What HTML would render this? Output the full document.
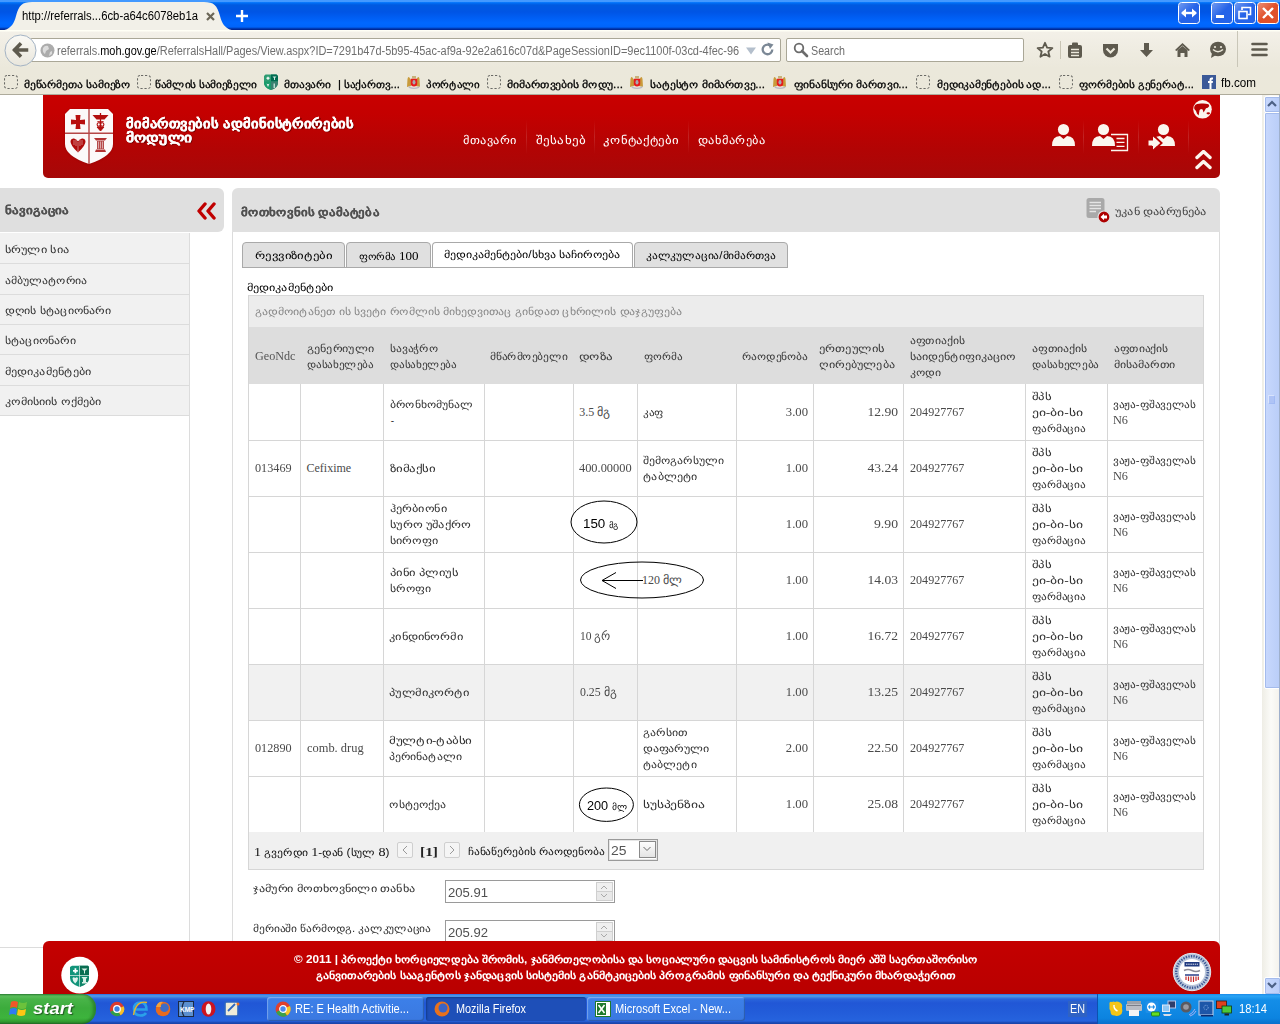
<!DOCTYPE html><html><head><meta charset="utf-8"><style>
html,body{margin:0;padding:0;width:1280px;height:1024px;overflow:hidden;background:#fff}
body{position:relative;font-family:"Liberation Sans",sans-serif}
body div, body svg{position:absolute}
.t{white-space:pre}
</style></head><body>
<div style="left:0px;top:0px;width:1280px;height:30px;background:linear-gradient(#4399ff 0px,#4399ff 1.8px,#0073fa 2.6px,#005ae0 5px,#0055e5 12px,#005df2 17px,#0068ff 23px,#0064fa 27px,#0034a8 28.8px,#00208a 30px)"></div>
<svg style="left:0;top:0" width="240" height="30"><path d="M0,30.5 C10,30.5 14,24 16,16 C19,5 22,2 32,2 L204,2 C214,2 217,5 220,16 C222,24 226,30.5 236,30.5 Z" fill="#f2f0e8"/></svg>
<div class="t" style="top:9px;font-family:'Liberation Sans',sans-serif;font-size:12px;font-weight:400;color:#000;line-height:14px;left:22.0px;transform:scaleX(0.942);transform-origin:left center;">http://referrals...6cb-a64c6078eb1a</div>
<svg style="left:204px;top:10px" width="13" height="13"><path d="M3,3 L10,10 M10,3 L3,10" stroke="#6b6657" stroke-width="2.2"/></svg>
<svg style="left:235px;top:9px" width="14" height="14"><path d="M7,1 V13 M1,7 H13" stroke="#fff" stroke-width="2.4"/></svg>
<svg style="left:1178px;top:2px" width="22" height="22"><defs><linearGradient id="wb1178" x1="0" y1="0" x2="1" y2="1"><stop offset="0" stop-color="#fff" stop-opacity=".35"/><stop offset=".5" stop-color="#fff" stop-opacity="0"/></linearGradient></defs><rect x="0.5" y="0.5" width="21" height="21" rx="3" fill="#2563e8" stroke="#fff" stroke-width="1"/><rect x="1" y="1" width="20" height="20" rx="3" fill="url(#wb1178)"/><path d="M4,11 H18" stroke="#fff" stroke-width="2.4"/><path d="M3,11 L8,6.5 V15.5Z M19,11 L14,6.5 V15.5Z" fill="#fff"/></svg>
<svg style="left:1211px;top:2px" width="22" height="22"><defs><linearGradient id="wb1211" x1="0" y1="0" x2="1" y2="1"><stop offset="0" stop-color="#fff" stop-opacity=".35"/><stop offset=".5" stop-color="#fff" stop-opacity="0"/></linearGradient></defs><rect x="0.5" y="0.5" width="21" height="21" rx="3" fill="#2563e8" stroke="#fff" stroke-width="1"/><rect x="1" y="1" width="20" height="20" rx="3" fill="url(#wb1211)"/><rect x="5" y="13" width="8" height="3" fill="#fff"/></svg>
<svg style="left:1234px;top:2px" width="22" height="22"><defs><linearGradient id="wb1234" x1="0" y1="0" x2="1" y2="1"><stop offset="0" stop-color="#fff" stop-opacity=".35"/><stop offset=".5" stop-color="#fff" stop-opacity="0"/></linearGradient></defs><rect x="0.5" y="0.5" width="21" height="21" rx="3" fill="#2563e8" stroke="#fff" stroke-width="1"/><rect x="1" y="1" width="20" height="20" rx="3" fill="url(#wb1234)"/><rect x="5" y="9.5" width="8" height="7" fill="none" stroke="#fff" stroke-width="1.6"/><path d="M8,8 V5.5 H16.5 V12.5 H14" fill="none" stroke="#fff" stroke-width="1.6"/></svg>
<svg style="left:1257px;top:2px" width="22" height="22"><defs><linearGradient id="wb1257" x1="0" y1="0" x2="1" y2="1"><stop offset="0" stop-color="#fff" stop-opacity=".35"/><stop offset=".5" stop-color="#fff" stop-opacity="0"/></linearGradient></defs><rect x="0.5" y="0.5" width="21" height="21" rx="3" fill="#e0502a" stroke="#fff" stroke-width="1"/><rect x="1" y="1" width="20" height="20" rx="3" fill="url(#wb1257)"/><path d="M6,6 L16,16 M16,6 L6,16" stroke="#fff" stroke-width="2.4"/></svg>
<div style="left:0px;top:30px;width:1280px;height:65px;background:linear-gradient(#fffff5 0px,#fffff5 1px,#f3f0e8 2px,#ebe8db 38px,#ebe8da)"></div>
<div style="left:0px;top:94px;width:1280px;height:1px;background:#aeab9c"></div>
<div style="left:30px;top:38px;width:749px;height:22px;background:#fff;border:1px solid #aaa797;border-radius:2px"></div>
<svg style="left:4px;top:34px" width="33" height="33"><defs><linearGradient id="bk" x1="0" y1="0" x2="0" y2="1"><stop offset="0" stop-color="#faf9f5"/><stop offset="1" stop-color="#e9e6dc"/></linearGradient></defs><circle cx="16.5" cy="16.5" r="15.5" fill="url(#bk)" stroke="#a3b3c4" stroke-width="1"/><path d="M10.5,16 L15.8,10.5 M10.5,16 L15.8,21.5 M11,16 H22.5" stroke="#5e5a4e" stroke-width="3.5" fill="none" stroke-linecap="square"/></svg>
<svg style="left:40px;top:43px" width="15" height="15"><circle cx="7.5" cy="7.5" r="7" fill="#acacac"/><path d="M3,5 Q5,2 8,3 L9,6 L6,8 L5,11 Q2,9 3,5Z M10,9 L12,8 L12,11 L9,13Z" fill="#dcdcdc"/></svg>
<div class="t" style="top:44px;font-family:'Liberation Sans',sans-serif;font-size:12px;font-weight:400;color:#6f6f6f;line-height:14px;left:57.0px;transform:scaleX(0.913);transform-origin:left center;">referrals.<span style="color:#000">moh.gov.ge</span>/ReferralsHall/Pages/View.aspx?ID=7291b47d-5b95-45ac-af9a-92e2a616c07d&amp;PageSessionID=9ec1100f-03cd-4fec-96</div>
<svg style="left:745px;top:46px" width="12" height="10"><path d="M1,1.5 H11 L6,8.5Z" fill="#b4bfcc"/></svg>
<svg style="left:760px;top:42px" width="15" height="15"><path d="M12.3,7.5 A4.8,4.8 0 1 1 9.7,3.2" stroke="#7b8896" stroke-width="2.3" fill="none"/><path d="M7.5,0.5 L13.5,2.5 L10,7Z" fill="#7b8896"/></svg>
<div style="left:786px;top:38px;width:236px;height:22px;background:#fff;border:1px solid #aaa797;border-radius:2px"></div>
<svg style="left:793px;top:42px" width="16" height="16"><circle cx="6" cy="6" r="4.3" stroke="#6b6b6b" stroke-width="1.8" fill="none"/><path d="M9,9 L14,14" stroke="#6b6b6b" stroke-width="2.6" stroke-linecap="round"/></svg>
<div class="t" style="top:44px;font-family:'Liberation Sans',sans-serif;font-size:12px;font-weight:400;color:#6d6d6d;line-height:14px;left:811.0px;transform:scaleX(0.894);transform-origin:left center;">Search</div>
<svg style="left:1036px;top:41px" width="18" height="18"><path d="M9,1.8 L11.1,6.7 L16.4,7.1 L12.3,10.5 L13.6,15.7 L9,12.9 L4.4,15.7 L5.7,10.5 L1.6,7.1 L6.9,6.7Z" fill="none" stroke="#5e5a4e" stroke-width="1.8" stroke-linejoin="round"/></svg>
<div style="left:1060px;top:41px;width:1px;height:18px;background:#c8c4b4"></div>
<svg style="left:1067px;top:42px" width="16" height="16"><rect x="1" y="3" width="14" height="13" rx="2" fill="#5e5a4e"/><rect x="5" y="0.5" width="6" height="4" rx="1" fill="#5e5a4e"/><path d="M4,7.5 H12 M4,10.5 H12 M4,13.5 H12" stroke="#ebe8db" stroke-width="1.3"/></svg>
<svg style="left:1102px;top:43px" width="17" height="15"><path d="M1,1 H16 V7 A7.5,7.5 0 0 1 1,7Z" fill="#5e5a4e"/><path d="M4.5,5.5 L8.5,9.5 L12.5,5.5" stroke="#ebe8db" stroke-width="2.2" fill="none"/></svg>
<svg style="left:1139px;top:42px" width="15" height="16"><path d="M5,1 H10 V8 H14 L7.5,15 L1,8 H5Z" fill="#5e5a4e"/></svg>
<svg style="left:1174px;top:42px" width="17" height="16"><path d="M8.5,1 L16,8 L14.5,9 L8.5,3.5 L2.5,9 L1,8Z" fill="#5e5a4e"/><path d="M3.5,8 L8.5,4 L13.5,8 V15 H10.5 V11 H6.5 V15 H3.5Z" fill="#5e5a4e"/></svg>
<svg style="left:1209px;top:41px" width="18" height="18"><ellipse cx="9" cy="8" rx="8" ry="7.3" fill="#5e5a4e"/><path d="M3,12 L2,17 L7,14Z" fill="#5e5a4e"/><circle cx="6" cy="6" r="1.1" fill="#ebe8db"/><circle cx="12" cy="6" r="1.1" fill="#ebe8db"/><path d="M4,8.5 Q9,13 14,8.5" stroke="#ebe8db" stroke-width="1.6" fill="none"/></svg>
<div style="left:1237px;top:31px;width:1px;height:36px;background:#c9c6b8"></div>
<svg style="left:1251px;top:42px" width="17" height="15"><path d="M1.5,2 H15.5 M1.5,7.5 H15.5 M1.5,13 H15.5" stroke="#5e5a4e" stroke-width="2.6" stroke-linecap="round"/></svg>
<svg style="left:4px;top:75px" width="14" height="14"><rect x="0.5" y="0.5" width="13" height="13" rx="2.5" fill="none" stroke="#6a6a66" stroke-width="1.1" stroke-dasharray="2.2,1.8" stroke-dashoffset="-1"/></svg>
<div class="t" style="top:77px;font-family:'Liberation Sans',sans-serif;font-size:10px;font-weight:400;color:#000;line-height:16px;-webkit-text-stroke:0.25px #000;left:24.0px;transform:scaleX(1.160);transform-origin:left center;">მეწარმეთა სამიეზო</div>
<svg style="left:137px;top:75px" width="14" height="14"><rect x="0.5" y="0.5" width="13" height="13" rx="2.5" fill="none" stroke="#6a6a66" stroke-width="1.1" stroke-dasharray="2.2,1.8" stroke-dashoffset="-1"/></svg>
<div class="t" style="top:77px;font-family:'Liberation Sans',sans-serif;font-size:10px;font-weight:400;color:#000;line-height:16px;-webkit-text-stroke:0.25px #000;left:155.0px;transform:scaleX(1.136);transform-origin:left center;">წამლის სამიეზელი</div>
<svg style="left:264px;top:74px" width="14" height="16"><path d="M1.5,0.5 H12.5 L14,2 V9 Q14,13.5 7,16 Q0,13.5 0,9 V2Z" fill="#2e9c72"/><path d="M7,0.5 H12.5 L14,2 V7.5 H7Z" fill="#006b50"/><path d="M7,7.5 H14 V9 Q14,13.5 7,16Z" fill="#3a8070"/><path d="M0,7.5 H7 V16 Q0,13.5 0,9Z" fill="#1a9a6a"/><path d="M2.5,4.3 H5.5 M4,2.8 V5.8" stroke="#eef8f4" stroke-width="1.4"/><path d="M8.5,2.5 H12.5 L11,4 V6 H10 V4Z" fill="#cfe8df"/><path d="M2.5,9.5 Q4,11 5.5,9.5 L4,13Z" fill="#e8f5f0"/><path d="M9.5,9.5 H11 V14 H9.5Z" fill="#b9d9cf"/></svg>
<div class="t" style="top:77px;font-family:'Liberation Sans',sans-serif;font-size:10px;font-weight:400;color:#000;line-height:16px;-webkit-text-stroke:0.25px #000;left:284.0px;transform:scaleX(1.146);transform-origin:left center;">მთავარი</div>
<div class="t" style="top:77px;font-family:'Liberation Sans',sans-serif;font-size:10px;font-weight:400;color:#000;line-height:16px;-webkit-text-stroke:0.25px #000;left:338.0px;transform:scaleX(1.133);transform-origin:left center;">| საქართვ...</div>
<svg style="left:406px;top:75px" width="15" height="14"><path d="M1,12 L1.5,4 Q2,1.5 3,2 L5,5 L5,11Z" fill="#c99b3a"/><path d="M14,12 L13.5,4 Q13,1.5 12,2 L10,5 L10,11Z" fill="#c99b3a"/><rect x="6" y="1" width="4" height="2.5" fill="#c8b27a"/><path d="M4.8,3.8 H11.2 V9 Q11.2,11 8,11.5 Q4.8,11 4.8,9Z" fill="#e61c1c"/><ellipse cx="8" cy="7.3" rx="1.5" ry="2.3" fill="#a9a9b0"/><path d="M2,11 Q8,14.5 14,11 L13,13 Q8,15 3,13Z" fill="#b9b9c4"/></svg>
<div class="t" style="top:77px;font-family:'Liberation Sans',sans-serif;font-size:10px;font-weight:400;color:#000;line-height:16px;-webkit-text-stroke:0.25px #000;left:426.0px;transform:scaleX(1.102);transform-origin:left center;">პორტალი</div>
<svg style="left:487px;top:75px" width="14" height="14"><rect x="0.5" y="0.5" width="13" height="13" rx="2.5" fill="none" stroke="#6a6a66" stroke-width="1.1" stroke-dasharray="2.2,1.8" stroke-dashoffset="-1"/></svg>
<div class="t" style="top:77px;font-family:'Liberation Sans',sans-serif;font-size:10px;font-weight:400;color:#000;line-height:16px;-webkit-text-stroke:0.25px #000;left:507.0px;transform:scaleX(1.182);transform-origin:left center;">მიმართვების მოდუ...</div>
<svg style="left:629px;top:75px" width="15" height="14"><path d="M1,12 L1.5,4 Q2,1.5 3,2 L5,5 L5,11Z" fill="#c99b3a"/><path d="M14,12 L13.5,4 Q13,1.5 12,2 L10,5 L10,11Z" fill="#c99b3a"/><rect x="6" y="1" width="4" height="2.5" fill="#c8b27a"/><path d="M4.8,3.8 H11.2 V9 Q11.2,11 8,11.5 Q4.8,11 4.8,9Z" fill="#e61c1c"/><ellipse cx="8" cy="7.3" rx="1.5" ry="2.3" fill="#a9a9b0"/><path d="M2,11 Q8,14.5 14,11 L13,13 Q8,15 3,13Z" fill="#b9b9c4"/></svg>
<div class="t" style="top:77px;font-family:'Liberation Sans',sans-serif;font-size:10px;font-weight:400;color:#000;line-height:16px;-webkit-text-stroke:0.25px #000;left:650.0px;transform:scaleX(1.160);transform-origin:left center;">სატესტო მიმართვე...</div>
<svg style="left:772px;top:75px" width="15" height="14"><path d="M1,12 L1.5,4 Q2,1.5 3,2 L5,5 L5,11Z" fill="#c99b3a"/><path d="M14,12 L13.5,4 Q13,1.5 12,2 L10,5 L10,11Z" fill="#c99b3a"/><rect x="6" y="1" width="4" height="2.5" fill="#c8b27a"/><path d="M4.8,3.8 H11.2 V9 Q11.2,11 8,11.5 Q4.8,11 4.8,9Z" fill="#e61c1c"/><ellipse cx="8" cy="7.3" rx="1.5" ry="2.3" fill="#a9a9b0"/><path d="M2,11 Q8,14.5 14,11 L13,13 Q8,15 3,13Z" fill="#b9b9c4"/></svg>
<div class="t" style="top:77px;font-family:'Liberation Sans',sans-serif;font-size:10px;font-weight:400;color:#000;line-height:16px;-webkit-text-stroke:0.25px #000;left:794.0px;transform:scaleX(1.162);transform-origin:left center;">ფინანსური მართვი...</div>
<svg style="left:916px;top:75px" width="14" height="14"><rect x="0.5" y="0.5" width="13" height="13" rx="2.5" fill="none" stroke="#6a6a66" stroke-width="1.1" stroke-dasharray="2.2,1.8" stroke-dashoffset="-1"/></svg>
<div class="t" style="top:77px;font-family:'Liberation Sans',sans-serif;font-size:10px;font-weight:400;color:#000;line-height:16px;-webkit-text-stroke:0.25px #000;left:937.0px;transform:scaleX(1.150);transform-origin:left center;">მედიკამენტების ად...</div>
<svg style="left:1059px;top:75px" width="14" height="14"><rect x="0.5" y="0.5" width="13" height="13" rx="2.5" fill="none" stroke="#6a6a66" stroke-width="1.1" stroke-dasharray="2.2,1.8" stroke-dashoffset="-1"/></svg>
<div class="t" style="top:77px;font-family:'Liberation Sans',sans-serif;font-size:10px;font-weight:400;color:#000;line-height:16px;-webkit-text-stroke:0.25px #000;left:1079.0px;transform:scaleX(1.137);transform-origin:left center;">ფორმების გენერატ...</div>
<svg style="left:1202px;top:75px" width="14" height="14"><rect width="14" height="14" fill="#3b5998"/><path d="M7.5,14 V8 H6 V6 H7.5 V4.5 Q7.5,2.5 9.8,2.5 H11 V4.5 H10 Q9.5,4.5 9.5,5 V6 H11 L10.7,8 H9.5 V14Z" fill="#fff"/></svg>
<div class="t" style="top:76px;font-family:'Liberation Sans',sans-serif;font-size:12px;font-weight:400;color:#000;line-height:14px;left:1221.0px;transform:scaleX(0.972);transform-origin:left center;">fb.com</div>
<div style="left:43px;top:95px;width:1177px;height:83px;background:linear-gradient(#c90000,#c40000 18px,#b20404 55px,#a60808);border-radius:0 0 5px 5px"></div>
<svg style="left:60px;top:104px" width="60" height="64" viewBox="0 0 60 64">
<defs><filter id="sh" x="-20%" y="-20%" width="140%" height="140%"><feGaussianBlur stdDeviation="1.2"/></filter></defs>
<path d="M10,5.5 H48 L53,10.5 V40 Q53,52 29,60.5 Q5,52 5,40 V10.5Z" fill="#700" opacity=".45" filter="url(#sh)"/>
<path d="M10,5 H48 L53,10 V40 Q53,52 29,60 Q5,52 5,40 V10Z" fill="#fcf9f9"/>
<path d="M29,5 V60 M5,29.2 H53" stroke="#b54747" stroke-width="1.4"/>
<path d="M15.5,11 H20.5 L20,16 L25,15.5 V20.5 L20,20 L20.5,25 H15.5 L16,20 L11,20.5 V15.5 L16,16Z" fill="#b80f0f"/>
<path d="M32.5,11 H48.5 L44.5,15.5 H36.5Z" fill="#b20e0e"/>
<path d="M40.5,9 V26" stroke="#b20e0e" stroke-width="1.3"/>
<circle cx="38.8" cy="20.5" r="1.7" fill="none" stroke="#b20e0e" stroke-width="1.1"/><circle cx="42.2" cy="20.5" r="1.7" fill="none" stroke="#b20e0e" stroke-width="1.1"/>
<path d="M37.5,17.5 Q40.5,19 43.5,17.5 M37,23 H44 L40.5,27Z" stroke="#b20e0e" stroke-width="1" fill="#b20e0e"/>
<path d="M10.5,37 Q11,34 14,34.5 Q16.5,35 18,37.5 Q19.5,35 22,34.5 Q25,34 25.5,37 Q26,41 18,48.5 Q10,41 10.5,37Z" fill="#b00c0c"/>
<path d="M14,36 V41 M16,35.5 V42 M18,38 V48 M20,35.5 V42 M22,36 V41" stroke="#e8c0c0" stroke-width=".6"/>
<path d="M34,34 H47 L45,36.5 H36Z" fill="#b33232"/>
<path d="M37,37 H44 V45 H37Z" fill="#b54a4a"/>
<path d="M38.5,37.5 V44.5 M40.5,37.5 V44.5 M42.5,37.5 V44.5" stroke="#ecd0d0" stroke-width=".7"/>
<path d="M36,45.5 H45 L46,48 H35Z" fill="#b33232"/>
</svg>
<div class="t" style="top:116px;font-family:'Liberation Sans',sans-serif;font-size:13px;font-weight:700;color:#fff;line-height:16px;text-shadow:1px 1px 0 rgba(60,0,0,.55);-webkit-text-stroke:0.3px #fff;left:126.0px;transform:scaleX(1.120);transform-origin:left center;">მიმართვების ადმინისტრირების</div>
<div class="t" style="top:130px;font-family:'Liberation Sans',sans-serif;font-size:13px;font-weight:700;color:#fff;line-height:16px;text-shadow:1px 1px 0 rgba(60,0,0,.55);-webkit-text-stroke:0.3px #fff;left:126.0px;transform:scaleX(1.188);transform-origin:left center;">მოდული</div>
<div class="t" style="top:132px;font-family:'Liberation Sans',sans-serif;font-size:11px;font-weight:400;color:#fff;line-height:16px;left:463.0px;transform:scaleX(1.125);transform-origin:left center;">მთავარი</div>
<div class="t" style="top:132px;font-family:'Liberation Sans',sans-serif;font-size:11px;font-weight:400;color:#fff;line-height:16px;left:536.0px;transform:scaleX(1.190);transform-origin:left center;">შესახებ</div>
<div class="t" style="top:132px;font-family:'Liberation Sans',sans-serif;font-size:11px;font-weight:400;color:#fff;line-height:16px;left:603.0px;transform:scaleX(1.169);transform-origin:left center;">კონტაქტები</div>
<div class="t" style="top:132px;font-family:'Liberation Sans',sans-serif;font-size:11px;font-weight:400;color:#fff;line-height:16px;left:698.0px;transform:scaleX(1.133);transform-origin:left center;">დახმარება</div>
<div style="left:526px;top:120px;width:1px;height:34px;background:linear-gradient(rgba(255,255,255,0),rgba(255,255,255,.13),rgba(255,255,255,0))"></div>
<div style="left:594px;top:120px;width:1px;height:34px;background:linear-gradient(rgba(255,255,255,0),rgba(255,255,255,.13),rgba(255,255,255,0))"></div>
<div style="left:688px;top:120px;width:1px;height:34px;background:linear-gradient(rgba(255,255,255,0),rgba(255,255,255,.13),rgba(255,255,255,0))"></div>
<div style="left:1083px;top:120px;width:1px;height:34px;background:linear-gradient(rgba(255,255,255,0),rgba(255,255,255,.13),rgba(255,255,255,0))"></div>
<div style="left:1138px;top:120px;width:1px;height:34px;background:linear-gradient(rgba(255,255,255,0),rgba(255,255,255,.13),rgba(255,255,255,0))"></div>
<div style="left:1188px;top:120px;width:1px;height:34px;background:linear-gradient(rgba(255,255,255,0),rgba(255,255,255,.13),rgba(255,255,255,0))"></div>
<svg style="left:1040px;top:120px" width="160" height="36"><circle cx="23.5" cy="9.5" r="5.6" fill="#fbf6ee"/><path d="M12,26 Q12,16 20,16 L23.5,19 L27,16 Q35,16 35,26Z" fill="#fbf6ee"/><circle cx="63.5" cy="9.5" r="5.6" fill="#fbf6ee"/><path d="M52,26 Q52,16 60,16 L63.5,19 L67,16 Q75,16 75,26Z" fill="#fbf6ee"/><path d="M71,14.5 H87.5 V30.5 H71" stroke="#fbf6ee" stroke-width="1.3" fill="none"/><path d="M76.5,18.5 H84.5 M76.5,22.3 H84.5 M76.5,26.3 H84.5" stroke="#fbf6ee" stroke-width="1.3"/><circle cx="123.5" cy="9.5" r="5.6" fill="#fbf6ee"/><path d="M112,26 Q112,16 120,16 L123.5,19 L127,16 Q135,16 135,26Z" fill="#fbf6ee"/><path d="M113.5,15.5 L121.5,23 L113.5,30.5" stroke="#b80303" stroke-width="2" fill="none"/><path d="M108.5,20.5 H113 V16.5 L120,23 L113,29.5 V25.5 H108.5Z" fill="#fbf6ee"/></svg>
<svg style="left:1193px;top:99px" width="20" height="21"><circle cx="9.5" cy="10.3" r="9.3" fill="#fbf6ee"/><path d="M1.2,8 Q1.8,5.6 4,5.1 L8,4.6 Q12,4.2 15.5,5.2 L16.3,7 L14.8,8.8 L13,9.3 L12,11 L10.6,13.4 L9.6,10.6 L8,10 L6.6,11 L5.6,16.6 L4,14.8 L3,12 L1.3,10Z" fill="#b80202"/><ellipse cx="15.3" cy="14.3" rx="1.8" ry="1.1" fill="#b80202"/></svg>
<svg style="left:1194px;top:150px" width="20" height="22"><path d="M3,7.5 L9.5,1.5 L16,7.5 M3,17.5 L9.5,11.5 L16,17.5" stroke="#fbf6ee" stroke-width="3.4" fill="none" stroke-linecap="round" stroke-linejoin="round"/></svg>
<div style="left:0px;top:188px;width:224px;height:44px;background:#dfdfdf;border-radius:0 6px 6px 0"></div>
<div class="t" style="top:202px;font-family:'Liberation Sans',sans-serif;font-size:10.5px;font-weight:700;color:#505050;line-height:16px;-webkit-text-stroke:0.1px #505050;left:5.0px;transform:scaleX(1.185);transform-origin:left center;">ნავიგაცია</div>
<svg style="left:196px;top:202px" width="22" height="18"><path d="M9,2 L3,9 L9,16 M18,2 L12,9 L18,16" stroke="#c00000" stroke-width="3.4" fill="none" stroke-linecap="round" stroke-linejoin="round"/></svg>
<div style="left:0px;top:233px;width:189px;height:183px;background:#f1f1f1"></div>
<div style="left:189px;top:233px;width:1px;height:714px;background:#dcdcdc"></div>
<div style="left:0px;top:263px;width:189px;height:1px;background:#dcdcdc"></div>
<div style="left:0px;top:294px;width:189px;height:1px;background:#dcdcdc"></div>
<div style="left:0px;top:324px;width:189px;height:1px;background:#dcdcdc"></div>
<div style="left:0px;top:354px;width:189px;height:1px;background:#dcdcdc"></div>
<div style="left:0px;top:385px;width:189px;height:1px;background:#dcdcdc"></div>
<div style="left:0px;top:415px;width:189px;height:1px;background:#dcdcdc"></div>
<div class="t" style="top:242px;font-family:'Liberation Sans',sans-serif;font-size:10px;font-weight:400;color:#333;line-height:16px;left:5.0px;transform:scaleX(1.236);transform-origin:left center;">სრული სია</div>
<div class="t" style="top:273px;font-family:'Liberation Sans',sans-serif;font-size:10px;font-weight:400;color:#333;line-height:16px;left:5.0px;transform:scaleX(1.188);transform-origin:left center;">ამბულატორია</div>
<div class="t" style="top:303px;font-family:'Liberation Sans',sans-serif;font-size:10px;font-weight:400;color:#333;line-height:16px;left:5.0px;transform:scaleX(1.208);transform-origin:left center;">დღის სტაციონარი</div>
<div class="t" style="top:333px;font-family:'Liberation Sans',sans-serif;font-size:10px;font-weight:400;color:#333;line-height:16px;left:5.0px;transform:scaleX(1.203);transform-origin:left center;">სტაციონარი</div>
<div class="t" style="top:364px;font-family:'Liberation Sans',sans-serif;font-size:10px;font-weight:400;color:#333;line-height:16px;left:5.0px;transform:scaleX(1.229);transform-origin:left center;">მედიკამენტები</div>
<div class="t" style="top:394px;font-family:'Liberation Sans',sans-serif;font-size:10px;font-weight:400;color:#333;line-height:16px;left:5.0px;transform:scaleX(1.219);transform-origin:left center;">კომისიის ოქმები</div>
<div style="left:0px;top:947px;width:43px;height:1px;background:#dcdcdc"></div>
<div style="left:232px;top:188px;width:988px;height:44px;background:#e0e0e0;border-radius:6px 6px 0 0"></div>
<div style="left:232px;top:232px;width:1px;height:715px;background:#dcdcdc"></div>
<div style="left:1219px;top:232px;width:1px;height:715px;background:#dcdcdc"></div>
<div class="t" style="top:204px;font-family:'Liberation Sans',sans-serif;font-size:10.5px;font-weight:700;color:#505050;line-height:16px;-webkit-text-stroke:0.1px #505050;left:241.0px;transform:scaleX(1.175);transform-origin:left center;">მოთხოვნის დამატება</div>
<svg style="left:1085px;top:197px" width="26" height="26"><rect x="1.5" y="1" width="18" height="20" rx="2.5" fill="#a9a9a9"/><path d="M4.5,5.5 H16 M4.5,8.5 H16 M4.5,11.5 H16 M4.5,14.5 H11" stroke="#e4e4e4" stroke-width="1.3"/><circle cx="19" cy="20" r="6" fill="#ad0000" stroke="#e0e0e0" stroke-width="1.2"/><path d="M15.5,20 L19,16.8 V23.2Z M18.5,18.6 H22 V21.4 H18.5Z" fill="#fff"/></svg>
<div class="t" style="top:204px;font-family:'Liberation Sans',sans-serif;font-size:10px;font-weight:400;color:#444;line-height:16px;left:1115.0px;transform:scaleX(1.240);transform-origin:left center;">უკან დაბრუნება</div>
<div style="left:242px;top:242px;width:101px;height:24px;background:#e0e0e0;border:1px solid #a9a9a9;border-radius:4px 4px 0 0"></div>
<div style="left:346px;top:242px;width:83px;height:24px;background:#e0e0e0;border:1px solid #a9a9a9;border-radius:4px 4px 0 0"></div>
<div style="left:432px;top:242px;width:199px;height:25px;background:#fff;border:1px solid #a9a9a9;border-bottom:none;border-radius:4px 4px 0 0"></div>
<div style="left:634px;top:242px;width:152px;height:24px;background:#e0e0e0;border:1px solid #a9a9a9;border-radius:4px 4px 0 0"></div>
<div style="left:242px;top:267px;width:546px;height:1px;background:#a9a9a9"></div>
<div class="t" style="top:248px;font-family:'Liberation Sans',sans-serif;font-size:10px;font-weight:400;color:#000;line-height:16px;left:255.0px;transform:scaleX(1.283);transform-origin:left center;">რევვიზიტები</div>
<div class="t" style="top:248px;font-family:'Liberation Sans',sans-serif;font-size:10px;font-weight:400;color:#000;line-height:16px;left:359.0px;transform:scaleX(1.086);transform-origin:left center;">ფორმა <span style="font-family:Liberation Serif;font-size:12px">100</span></div>
<div class="t" style="top:247px;font-family:'Liberation Sans',sans-serif;font-size:10px;font-weight:400;color:#000;line-height:16px;left:444.0px;transform:scaleX(1.204);transform-origin:left center;">მედიკამენტები/სხვა საჩიროება</div>
<div class="t" style="top:248px;font-family:'Liberation Sans',sans-serif;font-size:10px;font-weight:400;color:#000;line-height:16px;left:646.0px;transform:scaleX(1.163);transform-origin:left center;">კალკულაცია/მიმართვა</div>
<div class="t" style="top:280px;font-family:'Liberation Sans',sans-serif;font-size:10px;font-weight:400;color:#000;line-height:16px;left:247.0px;transform:scaleX(1.229);transform-origin:left center;">მედიკამენტები</div>
<div style="left:248px;top:295px;width:955px;height:32px;background:#ececec;border-top:1px solid #d8d8d8"></div>
<div class="t" style="top:304px;font-family:'Liberation Sans',sans-serif;font-size:10px;font-weight:400;color:#888;line-height:16px;left:255.0px;transform:scaleX(1.198);transform-origin:left center;">გადმოიტანეთ ის სვეტი რომლის მიხედვითაც გინდათ ცხრილის დაჯგუფება</div>
<div style="left:248px;top:327px;width:955px;height:57px;background:#dddddd"></div>
<div class="t" style="top:348px;font-family:'Liberation Serif',serif;font-size:12px;font-weight:400;color:#555;line-height:16px;left:254.5px;transform:scaleX(1.013);transform-origin:left center;">GeoNdc</div>
<div class="t" style="top:341px;font-family:'Liberation Sans',sans-serif;font-size:10px;font-weight:400;color:#3a3a3a;line-height:16px;left:306.6px;transform:scaleX(1.218);transform-origin:left center;">გენერიული</div>
<div class="t" style="top:357px;font-family:'Liberation Sans',sans-serif;font-size:10px;font-weight:400;color:#3a3a3a;line-height:16px;left:306.6px;transform:scaleX(1.125);transform-origin:left center;">დასახელება</div>
<div class="t" style="top:341px;font-family:'Liberation Sans',sans-serif;font-size:10px;font-weight:400;color:#3a3a3a;line-height:16px;left:389.5px;transform:scaleX(1.171);transform-origin:left center;">სავაჭრო</div>
<div class="t" style="top:357px;font-family:'Liberation Sans',sans-serif;font-size:10px;font-weight:400;color:#3a3a3a;line-height:16px;left:389.5px;transform:scaleX(1.127);transform-origin:left center;">დასახელება</div>
<div class="t" style="top:349px;font-family:'Liberation Sans',sans-serif;font-size:10px;font-weight:400;color:#3a3a3a;line-height:16px;left:490.4px;transform:scaleX(1.157);transform-origin:left center;">მწარმოებელი</div>
<div class="t" style="top:349px;font-family:'Liberation Sans',sans-serif;font-size:10px;font-weight:400;color:#3a3a3a;line-height:16px;left:579.0px;transform:scaleX(1.308);transform-origin:left center;">დოზა</div>
<div class="t" style="top:349px;font-family:'Liberation Sans',sans-serif;font-size:10px;font-weight:400;color:#3a3a3a;line-height:16px;left:643.7px;transform:scaleX(1.126);transform-origin:left center;">ფორმა</div>
<div class="t" style="top:349px;font-family:'Liberation Sans',sans-serif;font-size:10px;font-weight:400;color:#3a3a3a;line-height:16px;left:742.0px;transform:scaleX(1.158);transform-origin:left center;">რაოდენობა</div>
<div class="t" style="top:341px;font-family:'Liberation Sans',sans-serif;font-size:10px;font-weight:400;color:#3a3a3a;line-height:16px;left:819.0px;transform:scaleX(1.258);transform-origin:left center;">ერთეულის</div>
<div class="t" style="top:357px;font-family:'Liberation Sans',sans-serif;font-size:10px;font-weight:400;color:#3a3a3a;line-height:16px;left:819.0px;transform:scaleX(1.222);transform-origin:left center;">ღირებულება</div>
<div class="t" style="top:333px;font-family:'Liberation Sans',sans-serif;font-size:10px;font-weight:400;color:#3a3a3a;line-height:16px;left:909.6px;transform:scaleX(1.183);transform-origin:left center;">აფთიაქის</div>
<div class="t" style="top:349px;font-family:'Liberation Sans',sans-serif;font-size:10px;font-weight:400;color:#3a3a3a;line-height:16px;left:909.6px;transform:scaleX(1.218);transform-origin:left center;">საიდენტიფიკაციო</div>
<div class="t" style="top:365px;font-family:'Liberation Sans',sans-serif;font-size:10px;font-weight:400;color:#3a3a3a;line-height:16px;left:909.6px;transform:scaleX(1.192);transform-origin:left center;">კოდი</div>
<div class="t" style="top:341px;font-family:'Liberation Sans',sans-serif;font-size:10px;font-weight:400;color:#3a3a3a;line-height:16px;left:1031.5px;transform:scaleX(1.196);transform-origin:left center;">აფთიაქის</div>
<div class="t" style="top:357px;font-family:'Liberation Sans',sans-serif;font-size:10px;font-weight:400;color:#3a3a3a;line-height:16px;left:1031.5px;transform:scaleX(1.136);transform-origin:left center;">დასახელება</div>
<div class="t" style="top:341px;font-family:'Liberation Sans',sans-serif;font-size:10px;font-weight:400;color:#3a3a3a;line-height:16px;left:1113.7px;transform:scaleX(1.174);transform-origin:left center;">აფთიაქის</div>
<div class="t" style="top:357px;font-family:'Liberation Sans',sans-serif;font-size:10px;font-weight:400;color:#3a3a3a;line-height:16px;left:1113.7px;transform:scaleX(1.202);transform-origin:left center;">მისამართი</div>
<div style="left:248px;top:440px;width:955px;height:1px;background:#d6d6d6"></div>
<div class="t" style="top:404px;font-family:'Liberation Serif',serif;font-size:12px;font-weight:400;color:#4a4a4a;line-height:16px;right:472.0px;transform:scaleX(1.057);transform-origin:right center;">3.00</div>
<div class="t" style="top:404px;font-family:'Liberation Serif',serif;font-size:12px;font-weight:400;color:#4a4a4a;line-height:16px;right:382.0px;transform:scaleX(1.133);transform-origin:right center;">12.90</div>
<div class="t" style="top:404px;font-family:'Liberation Serif',serif;font-size:12px;font-weight:400;color:#4a4a4a;line-height:16px;left:909.8px;transform:scaleX(1.007);transform-origin:left center;">204927767</div>
<div class="t" style="top:389px;font-family:'Liberation Sans',sans-serif;font-size:10px;font-weight:400;color:#333;line-height:16px;left:1031.7px;transform:scaleX(1.287);transform-origin:left center;">შპს</div>
<div class="t" style="top:405px;font-family:'Liberation Sans',sans-serif;font-size:10px;font-weight:400;color:#333;line-height:16px;left:1031.7px;transform:scaleX(1.377);transform-origin:left center;">ეი-ბი-სი</div>
<div class="t" style="top:421px;font-family:'Liberation Sans',sans-serif;font-size:10px;font-weight:400;color:#333;line-height:16px;left:1031.7px;transform:scaleX(1.136);transform-origin:left center;">ფარმაცია</div>
<div class="t" style="top:397px;font-family:'Liberation Sans',sans-serif;font-size:10px;font-weight:400;color:#333;line-height:16px;left:1113.3px;transform:scaleX(1.143);transform-origin:left center;">ვაჟა-ფშაველას</div>
<div class="t" style="top:412px;font-family:'Liberation Serif',serif;font-size:12px;font-weight:400;color:#4a4a4a;line-height:16px;left:1113.0px;transform:scaleX(1.022);transform-origin:left center;">N6</div>
<div style="left:248px;top:496px;width:955px;height:1px;background:#d6d6d6"></div>
<div class="t" style="top:460px;font-family:'Liberation Serif',serif;font-size:12px;font-weight:400;color:#4a4a4a;line-height:16px;right:472.0px;transform:scaleX(1.057);transform-origin:right center;">1.00</div>
<div class="t" style="top:460px;font-family:'Liberation Serif',serif;font-size:12px;font-weight:400;color:#4a4a4a;line-height:16px;right:382.0px;transform:scaleX(1.133);transform-origin:right center;">43.24</div>
<div class="t" style="top:460px;font-family:'Liberation Serif',serif;font-size:12px;font-weight:400;color:#4a4a4a;line-height:16px;left:909.8px;transform:scaleX(1.007);transform-origin:left center;">204927767</div>
<div class="t" style="top:445px;font-family:'Liberation Sans',sans-serif;font-size:10px;font-weight:400;color:#333;line-height:16px;left:1031.7px;transform:scaleX(1.287);transform-origin:left center;">შპს</div>
<div class="t" style="top:461px;font-family:'Liberation Sans',sans-serif;font-size:10px;font-weight:400;color:#333;line-height:16px;left:1031.7px;transform:scaleX(1.377);transform-origin:left center;">ეი-ბი-სი</div>
<div class="t" style="top:477px;font-family:'Liberation Sans',sans-serif;font-size:10px;font-weight:400;color:#333;line-height:16px;left:1031.7px;transform:scaleX(1.136);transform-origin:left center;">ფარმაცია</div>
<div class="t" style="top:453px;font-family:'Liberation Sans',sans-serif;font-size:10px;font-weight:400;color:#333;line-height:16px;left:1113.3px;transform:scaleX(1.143);transform-origin:left center;">ვაჟა-ფშაველას</div>
<div class="t" style="top:468px;font-family:'Liberation Serif',serif;font-size:12px;font-weight:400;color:#4a4a4a;line-height:16px;left:1113.0px;transform:scaleX(1.022);transform-origin:left center;">N6</div>
<div style="left:248px;top:552px;width:955px;height:1px;background:#d6d6d6"></div>
<div class="t" style="top:516px;font-family:'Liberation Serif',serif;font-size:12px;font-weight:400;color:#4a4a4a;line-height:16px;right:472.0px;transform:scaleX(1.057);transform-origin:right center;">1.00</div>
<div class="t" style="top:516px;font-family:'Liberation Serif',serif;font-size:12px;font-weight:400;color:#4a4a4a;line-height:16px;right:382.0px;transform:scaleX(1.143);transform-origin:right center;">9.90</div>
<div class="t" style="top:516px;font-family:'Liberation Serif',serif;font-size:12px;font-weight:400;color:#4a4a4a;line-height:16px;left:909.8px;transform:scaleX(1.007);transform-origin:left center;">204927767</div>
<div class="t" style="top:501px;font-family:'Liberation Sans',sans-serif;font-size:10px;font-weight:400;color:#333;line-height:16px;left:1031.7px;transform:scaleX(1.287);transform-origin:left center;">შპს</div>
<div class="t" style="top:517px;font-family:'Liberation Sans',sans-serif;font-size:10px;font-weight:400;color:#333;line-height:16px;left:1031.7px;transform:scaleX(1.377);transform-origin:left center;">ეი-ბი-სი</div>
<div class="t" style="top:533px;font-family:'Liberation Sans',sans-serif;font-size:10px;font-weight:400;color:#333;line-height:16px;left:1031.7px;transform:scaleX(1.136);transform-origin:left center;">ფარმაცია</div>
<div class="t" style="top:509px;font-family:'Liberation Sans',sans-serif;font-size:10px;font-weight:400;color:#333;line-height:16px;left:1113.3px;transform:scaleX(1.143);transform-origin:left center;">ვაჟა-ფშაველას</div>
<div class="t" style="top:524px;font-family:'Liberation Serif',serif;font-size:12px;font-weight:400;color:#4a4a4a;line-height:16px;left:1113.0px;transform:scaleX(1.022);transform-origin:left center;">N6</div>
<div style="left:248px;top:608px;width:955px;height:1px;background:#d6d6d6"></div>
<div class="t" style="top:572px;font-family:'Liberation Serif',serif;font-size:12px;font-weight:400;color:#4a4a4a;line-height:16px;right:472.0px;transform:scaleX(1.057);transform-origin:right center;">1.00</div>
<div class="t" style="top:572px;font-family:'Liberation Serif',serif;font-size:12px;font-weight:400;color:#4a4a4a;line-height:16px;right:382.0px;transform:scaleX(1.133);transform-origin:right center;">14.03</div>
<div class="t" style="top:572px;font-family:'Liberation Serif',serif;font-size:12px;font-weight:400;color:#4a4a4a;line-height:16px;left:909.8px;transform:scaleX(1.007);transform-origin:left center;">204927767</div>
<div class="t" style="top:557px;font-family:'Liberation Sans',sans-serif;font-size:10px;font-weight:400;color:#333;line-height:16px;left:1031.7px;transform:scaleX(1.287);transform-origin:left center;">შპს</div>
<div class="t" style="top:573px;font-family:'Liberation Sans',sans-serif;font-size:10px;font-weight:400;color:#333;line-height:16px;left:1031.7px;transform:scaleX(1.377);transform-origin:left center;">ეი-ბი-სი</div>
<div class="t" style="top:589px;font-family:'Liberation Sans',sans-serif;font-size:10px;font-weight:400;color:#333;line-height:16px;left:1031.7px;transform:scaleX(1.136);transform-origin:left center;">ფარმაცია</div>
<div class="t" style="top:565px;font-family:'Liberation Sans',sans-serif;font-size:10px;font-weight:400;color:#333;line-height:16px;left:1113.3px;transform:scaleX(1.143);transform-origin:left center;">ვაჟა-ფშაველას</div>
<div class="t" style="top:580px;font-family:'Liberation Serif',serif;font-size:12px;font-weight:400;color:#4a4a4a;line-height:16px;left:1113.0px;transform:scaleX(1.022);transform-origin:left center;">N6</div>
<div style="left:248px;top:664px;width:955px;height:1px;background:#d6d6d6"></div>
<div class="t" style="top:628px;font-family:'Liberation Serif',serif;font-size:12px;font-weight:400;color:#4a4a4a;line-height:16px;right:472.0px;transform:scaleX(1.057);transform-origin:right center;">1.00</div>
<div class="t" style="top:628px;font-family:'Liberation Serif',serif;font-size:12px;font-weight:400;color:#4a4a4a;line-height:16px;right:382.0px;transform:scaleX(1.133);transform-origin:right center;">16.72</div>
<div class="t" style="top:628px;font-family:'Liberation Serif',serif;font-size:12px;font-weight:400;color:#4a4a4a;line-height:16px;left:909.8px;transform:scaleX(1.007);transform-origin:left center;">204927767</div>
<div class="t" style="top:613px;font-family:'Liberation Sans',sans-serif;font-size:10px;font-weight:400;color:#333;line-height:16px;left:1031.7px;transform:scaleX(1.287);transform-origin:left center;">შპს</div>
<div class="t" style="top:629px;font-family:'Liberation Sans',sans-serif;font-size:10px;font-weight:400;color:#333;line-height:16px;left:1031.7px;transform:scaleX(1.377);transform-origin:left center;">ეი-ბი-სი</div>
<div class="t" style="top:645px;font-family:'Liberation Sans',sans-serif;font-size:10px;font-weight:400;color:#333;line-height:16px;left:1031.7px;transform:scaleX(1.136);transform-origin:left center;">ფარმაცია</div>
<div class="t" style="top:621px;font-family:'Liberation Sans',sans-serif;font-size:10px;font-weight:400;color:#333;line-height:16px;left:1113.3px;transform:scaleX(1.143);transform-origin:left center;">ვაჟა-ფშაველას</div>
<div class="t" style="top:636px;font-family:'Liberation Serif',serif;font-size:12px;font-weight:400;color:#4a4a4a;line-height:16px;left:1113.0px;transform:scaleX(1.022);transform-origin:left center;">N6</div>
<div style="left:249px;top:665px;width:954px;height:55px;background:#f1f1f1"></div>
<div style="left:248px;top:720px;width:955px;height:1px;background:#d6d6d6"></div>
<div class="t" style="top:684px;font-family:'Liberation Serif',serif;font-size:12px;font-weight:400;color:#4a4a4a;line-height:16px;right:472.0px;transform:scaleX(1.057);transform-origin:right center;">1.00</div>
<div class="t" style="top:684px;font-family:'Liberation Serif',serif;font-size:12px;font-weight:400;color:#4a4a4a;line-height:16px;right:382.0px;transform:scaleX(1.133);transform-origin:right center;">13.25</div>
<div class="t" style="top:684px;font-family:'Liberation Serif',serif;font-size:12px;font-weight:400;color:#4a4a4a;line-height:16px;left:909.8px;transform:scaleX(1.007);transform-origin:left center;">204927767</div>
<div class="t" style="top:669px;font-family:'Liberation Sans',sans-serif;font-size:10px;font-weight:400;color:#333;line-height:16px;left:1031.7px;transform:scaleX(1.287);transform-origin:left center;">შპს</div>
<div class="t" style="top:685px;font-family:'Liberation Sans',sans-serif;font-size:10px;font-weight:400;color:#333;line-height:16px;left:1031.7px;transform:scaleX(1.377);transform-origin:left center;">ეი-ბი-სი</div>
<div class="t" style="top:701px;font-family:'Liberation Sans',sans-serif;font-size:10px;font-weight:400;color:#333;line-height:16px;left:1031.7px;transform:scaleX(1.136);transform-origin:left center;">ფარმაცია</div>
<div class="t" style="top:677px;font-family:'Liberation Sans',sans-serif;font-size:10px;font-weight:400;color:#333;line-height:16px;left:1113.3px;transform:scaleX(1.143);transform-origin:left center;">ვაჟა-ფშაველას</div>
<div class="t" style="top:692px;font-family:'Liberation Serif',serif;font-size:12px;font-weight:400;color:#4a4a4a;line-height:16px;left:1113.0px;transform:scaleX(1.022);transform-origin:left center;">N6</div>
<div style="left:248px;top:776px;width:955px;height:1px;background:#d6d6d6"></div>
<div class="t" style="top:740px;font-family:'Liberation Serif',serif;font-size:12px;font-weight:400;color:#4a4a4a;line-height:16px;right:472.0px;transform:scaleX(1.057);transform-origin:right center;">2.00</div>
<div class="t" style="top:740px;font-family:'Liberation Serif',serif;font-size:12px;font-weight:400;color:#4a4a4a;line-height:16px;right:382.0px;transform:scaleX(1.133);transform-origin:right center;">22.50</div>
<div class="t" style="top:740px;font-family:'Liberation Serif',serif;font-size:12px;font-weight:400;color:#4a4a4a;line-height:16px;left:909.8px;transform:scaleX(1.007);transform-origin:left center;">204927767</div>
<div class="t" style="top:725px;font-family:'Liberation Sans',sans-serif;font-size:10px;font-weight:400;color:#333;line-height:16px;left:1031.7px;transform:scaleX(1.287);transform-origin:left center;">შპს</div>
<div class="t" style="top:741px;font-family:'Liberation Sans',sans-serif;font-size:10px;font-weight:400;color:#333;line-height:16px;left:1031.7px;transform:scaleX(1.377);transform-origin:left center;">ეი-ბი-სი</div>
<div class="t" style="top:757px;font-family:'Liberation Sans',sans-serif;font-size:10px;font-weight:400;color:#333;line-height:16px;left:1031.7px;transform:scaleX(1.136);transform-origin:left center;">ფარმაცია</div>
<div class="t" style="top:733px;font-family:'Liberation Sans',sans-serif;font-size:10px;font-weight:400;color:#333;line-height:16px;left:1113.3px;transform:scaleX(1.143);transform-origin:left center;">ვაჟა-ფშაველას</div>
<div class="t" style="top:748px;font-family:'Liberation Serif',serif;font-size:12px;font-weight:400;color:#4a4a4a;line-height:16px;left:1113.0px;transform:scaleX(1.022);transform-origin:left center;">N6</div>
<div style="left:248px;top:832px;width:955px;height:1px;background:#d6d6d6"></div>
<div class="t" style="top:796px;font-family:'Liberation Serif',serif;font-size:12px;font-weight:400;color:#4a4a4a;line-height:16px;right:472.0px;transform:scaleX(1.057);transform-origin:right center;">1.00</div>
<div class="t" style="top:796px;font-family:'Liberation Serif',serif;font-size:12px;font-weight:400;color:#4a4a4a;line-height:16px;right:382.0px;transform:scaleX(1.133);transform-origin:right center;">25.08</div>
<div class="t" style="top:796px;font-family:'Liberation Serif',serif;font-size:12px;font-weight:400;color:#4a4a4a;line-height:16px;left:909.8px;transform:scaleX(1.007);transform-origin:left center;">204927767</div>
<div class="t" style="top:781px;font-family:'Liberation Sans',sans-serif;font-size:10px;font-weight:400;color:#333;line-height:16px;left:1031.7px;transform:scaleX(1.287);transform-origin:left center;">შპს</div>
<div class="t" style="top:797px;font-family:'Liberation Sans',sans-serif;font-size:10px;font-weight:400;color:#333;line-height:16px;left:1031.7px;transform:scaleX(1.377);transform-origin:left center;">ეი-ბი-სი</div>
<div class="t" style="top:813px;font-family:'Liberation Sans',sans-serif;font-size:10px;font-weight:400;color:#333;line-height:16px;left:1031.7px;transform:scaleX(1.136);transform-origin:left center;">ფარმაცია</div>
<div class="t" style="top:789px;font-family:'Liberation Sans',sans-serif;font-size:10px;font-weight:400;color:#333;line-height:16px;left:1113.3px;transform:scaleX(1.143);transform-origin:left center;">ვაჟა-ფშაველას</div>
<div class="t" style="top:804px;font-family:'Liberation Serif',serif;font-size:12px;font-weight:400;color:#4a4a4a;line-height:16px;left:1113.0px;transform:scaleX(1.022);transform-origin:left center;">N6</div>
<div class="t" style="top:397px;font-family:'Liberation Sans',sans-serif;font-size:10px;font-weight:400;color:#333;line-height:16px;left:389.7px;transform:scaleX(1.181);transform-origin:left center;">ბრონხომუნალ</div>
<div class="t" style="top:413px;font-family:'Liberation Sans',sans-serif;font-size:10px;font-weight:400;color:#333;line-height:16px;left:390.7px;">-</div>
<div class="t" style="top:404px;font-family:'Liberation Serif',serif;font-size:12px;font-weight:400;color:#4a4a4a;line-height:16px;left:579.2px;">3.5 <span style="font-family:Liberation Sans">მგ</span></div>
<div class="t" style="top:405px;font-family:'Liberation Sans',sans-serif;font-size:10px;font-weight:400;color:#333;line-height:16px;left:642.8px;transform:scaleX(1.122);transform-origin:left center;">კაფ</div>
<div class="t" style="top:460px;font-family:'Liberation Serif',serif;font-size:12px;font-weight:400;color:#4a4a4a;line-height:16px;left:254.6px;transform:scaleX(1.019);transform-origin:left center;">013469</div>
<div class="t" style="top:460px;font-family:'Liberation Serif',serif;font-size:12px;font-weight:400;color:#4a4a4a;line-height:16px;left:306.5px;">Cefixime</div>
<div class="t" style="top:461px;font-family:'Liberation Sans',sans-serif;font-size:10px;font-weight:400;color:#333;line-height:16px;left:389.7px;transform:scaleX(1.294);transform-origin:left center;">ზიმაქსი</div>
<div class="t" style="top:460px;font-family:'Liberation Serif',serif;font-size:12px;font-weight:400;color:#4a4a4a;line-height:16px;left:578.7px;transform:scaleX(1.031);transform-origin:left center;">400.00000</div>
<div class="t" style="top:453px;font-family:'Liberation Sans',sans-serif;font-size:10px;font-weight:400;color:#333;line-height:16px;left:643.3px;transform:scaleX(1.187);transform-origin:left center;">შემოგარსული</div>
<div class="t" style="top:469px;font-family:'Liberation Sans',sans-serif;font-size:10px;font-weight:400;color:#333;line-height:16px;left:643.3px;transform:scaleX(1.209);transform-origin:left center;">ტაბლეტი</div>
<div class="t" style="top:501px;font-family:'Liberation Sans',sans-serif;font-size:10px;font-weight:400;color:#333;line-height:16px;left:389.5px;transform:scaleX(1.233);transform-origin:left center;">ჰერბიონი</div>
<div class="t" style="top:517px;font-family:'Liberation Sans',sans-serif;font-size:10px;font-weight:400;color:#333;line-height:16px;left:389.5px;transform:scaleX(1.250);transform-origin:left center;">სურო უშაქრო</div>
<div class="t" style="top:533px;font-family:'Liberation Sans',sans-serif;font-size:10px;font-weight:400;color:#333;line-height:16px;left:389.5px;transform:scaleX(1.223);transform-origin:left center;">სიროფი</div>
<div class="t" style="top:565px;font-family:'Liberation Sans',sans-serif;font-size:10px;font-weight:400;color:#333;line-height:16px;left:389.5px;transform:scaleX(1.264);transform-origin:left center;">პინი პლიუს</div>
<div class="t" style="top:581px;font-family:'Liberation Sans',sans-serif;font-size:10px;font-weight:400;color:#333;line-height:16px;left:389.5px;transform:scaleX(1.197);transform-origin:left center;">სროფი</div>
<div class="t" style="top:629px;font-family:'Liberation Sans',sans-serif;font-size:10px;font-weight:400;color:#333;line-height:16px;left:388.5px;transform:scaleX(1.251);transform-origin:left center;">კინდინორმი</div>
<div class="t" style="top:628px;font-family:'Liberation Serif',serif;font-size:12px;font-weight:400;color:#4a4a4a;line-height:16px;left:579.5px;transform:scaleX(0.963);transform-origin:left center;">10 <span style="font-family:Liberation Sans">გრ</span></div>
<div class="t" style="top:685px;font-family:'Liberation Sans',sans-serif;font-size:10px;font-weight:400;color:#333;line-height:16px;left:388.5px;transform:scaleX(1.256);transform-origin:left center;">პულმიკორტი</div>
<div class="t" style="top:684px;font-family:'Liberation Serif',serif;font-size:12px;font-weight:400;color:#4a4a4a;line-height:16px;left:579.5px;transform:scaleX(0.986);transform-origin:left center;">0.25 <span style="font-family:Liberation Sans">მგ</span></div>
<div class="t" style="top:740px;font-family:'Liberation Serif',serif;font-size:12px;font-weight:400;color:#4a4a4a;line-height:16px;left:254.7px;transform:scaleX(1.017);transform-origin:left center;">012890</div>
<div class="t" style="top:740px;font-family:'Liberation Serif',serif;font-size:12px;font-weight:400;color:#4a4a4a;line-height:16px;left:306.6px;transform:scaleX(1.036);transform-origin:left center;">comb. drug</div>
<div class="t" style="top:733px;font-family:'Liberation Sans',sans-serif;font-size:10px;font-weight:400;color:#333;line-height:16px;left:388.5px;transform:scaleX(1.306);transform-origin:left center;">მულტი-ტაბსი</div>
<div class="t" style="top:749px;font-family:'Liberation Sans',sans-serif;font-size:10px;font-weight:400;color:#333;line-height:16px;left:388.5px;transform:scaleX(1.192);transform-origin:left center;">პერინატალი</div>
<div class="t" style="top:725px;font-family:'Liberation Sans',sans-serif;font-size:10px;font-weight:400;color:#333;line-height:16px;left:643.0px;transform:scaleX(1.195);transform-origin:left center;">გარსით</div>
<div class="t" style="top:741px;font-family:'Liberation Sans',sans-serif;font-size:10px;font-weight:400;color:#333;line-height:16px;left:643.0px;transform:scaleX(1.209);transform-origin:left center;">დაფარული</div>
<div class="t" style="top:757px;font-family:'Liberation Sans',sans-serif;font-size:10px;font-weight:400;color:#333;line-height:16px;left:643.0px;transform:scaleX(1.196);transform-origin:left center;">ტაბლეტი</div>
<div class="t" style="top:797px;font-family:'Liberation Sans',sans-serif;font-size:10px;font-weight:400;color:#333;line-height:16px;left:388.5px;transform:scaleX(1.194);transform-origin:left center;">ოსტეოქეა</div>
<div class="t" style="top:797px;font-family:'Liberation Sans',sans-serif;font-size:10px;font-weight:400;color:#333;line-height:16px;left:643.0px;transform:scaleX(1.367);transform-origin:left center;">სუსპენზია</div>
<div style="left:248px;top:384px;width:1px;height:448px;background:#d6d6d6"></div>
<div style="left:300px;top:384px;width:1px;height:448px;background:#d6d6d6"></div>
<div style="left:383px;top:384px;width:1px;height:448px;background:#d6d6d6"></div>
<div style="left:484px;top:384px;width:1px;height:448px;background:#d6d6d6"></div>
<div style="left:573px;top:384px;width:1px;height:448px;background:#d6d6d6"></div>
<div style="left:637px;top:384px;width:1px;height:448px;background:#d6d6d6"></div>
<div style="left:736px;top:384px;width:1px;height:448px;background:#d6d6d6"></div>
<div style="left:813px;top:384px;width:1px;height:448px;background:#d6d6d6"></div>
<div style="left:903px;top:384px;width:1px;height:448px;background:#d6d6d6"></div>
<div style="left:1025px;top:384px;width:1px;height:448px;background:#d6d6d6"></div>
<div style="left:1107px;top:384px;width:1px;height:448px;background:#d6d6d6"></div>
<div style="left:1203px;top:384px;width:1px;height:448px;background:#d6d6d6"></div>
<div style="left:248px;top:295px;width:1px;height:574px;background:#d6d6d6"></div>
<div style="left:1203px;top:295px;width:1px;height:574px;background:#d6d6d6"></div>
<svg style="left:560px;top:495px" width="160" height="330"><ellipse cx="44" cy="27" rx="33" ry="21" fill="#fff" stroke="#000" stroke-width="1"/><ellipse cx="82" cy="85" rx="61.5" ry="18" fill="none" stroke="#000" stroke-width="1"/><path d="M42,85.5 H83 M42,85.5 L56,77.5 M42,85.5 L56,93.5" stroke="#000" stroke-width="1" fill="none"/><ellipse cx="46.4" cy="309.7" rx="27" ry="16.7" fill="#fff" stroke="#000" stroke-width="1"/></svg>
<div class="t" style="top:516px;font-family:'Liberation Sans',sans-serif;font-size:12px;font-weight:400;color:#000;line-height:16px;left:583.0px;transform:scaleX(1.113);transform-origin:left center;">150 <span style="font-size:8px">მგ</span></div>
<div class="t" style="top:572px;font-family:'Liberation Serif',serif;font-size:12px;font-weight:400;color:#4a4a4a;line-height:16px;left:642.0px;">120 <span style="font-family:Liberation Sans">მლ</span></div>
<div class="t" style="top:798px;font-family:'Liberation Sans',sans-serif;font-size:12px;font-weight:400;color:#000;line-height:16px;left:587.2px;transform:scaleX(1.058);transform-origin:left center;">200 <span style="font-size:8.5px">მლ</span></div>
<div style="left:249px;top:832px;width:954px;height:37px;background:#f0f0f0"></div>
<div style="left:248px;top:869px;width:956px;height:1px;background:#d6d6d6"></div>
<div class="t" style="top:844px;font-family:'Liberation Sans',sans-serif;font-size:10px;font-weight:400;color:#111;line-height:16px;left:254.0px;transform:scaleX(1.177);transform-origin:left center;"><span style="font-family:Liberation Serif;font-size:12px">1</span> გვერდი <span style="font-family:Liberation Serif;font-size:12px">1</span>-დან (სულ <span style="font-family:Liberation Serif;font-size:12px">8</span>)</div>
<div style="left:397px;top:842px;width:14px;height:14px;border:1px solid #cfcfcf;background:#f5f5f5;border-radius:2px"></div>
<svg style="left:401px;top:845px" width="8" height="10"><path d="M6,1 L2,5 L6,9" stroke="#9a9a9a" fill="none"/></svg>
<div class="t" style="top:844px;font-family:'Liberation Serif',serif;font-size:12px;font-weight:700;color:#222;line-height:16px;left:419.5px;transform:scaleX(1.286);transform-origin:left center;">[1]</div>
<div style="left:444px;top:842px;width:14px;height:14px;border:1px solid #cfcfcf;background:#f5f5f5;border-radius:2px"></div>
<svg style="left:448px;top:845px" width="8" height="10"><path d="M2,1 L6,5 L2,9" stroke="#9a9a9a" fill="none"/></svg>
<div class="t" style="top:844px;font-family:'Liberation Sans',sans-serif;font-size:10px;font-weight:400;color:#111;line-height:16px;left:467.6px;transform:scaleX(1.163);transform-origin:left center;">ჩანაწერების რაოდენობა</div>
<div style="left:608px;top:839px;width:48px;height:20px;background:#fff;border:1px solid #9a9a9a;box-shadow:inset 0 0 0 1px #e6e6e6"></div>
<div class="t" style="top:843px;font-family:'Liberation Sans',sans-serif;font-size:12.5px;font-weight:400;color:#555;line-height:16px;left:610.5px;transform:scaleX(1.115);transform-origin:left center;">25</div>
<div style="left:639px;top:841px;width:15px;height:15px;background:linear-gradient(#fdfdfd,#e4e4e4);border:1px solid #8a8a8a"></div>
<svg style="left:642px;top:845px" width="10" height="8"><path d="M1.5,2 L5,5.5 L8.5,2" stroke="#6a6a6a" stroke-width="1" fill="none"/></svg>
<div class="t" style="top:881px;font-family:'Liberation Sans',sans-serif;font-size:10px;font-weight:400;color:#333;line-height:16px;left:252.8px;transform:scaleX(1.231);transform-origin:left center;">ჯამური მოთხოვნილი თანხა</div>
<div style="left:445px;top:880px;width:168px;height:21px;background:#fff;border:1px solid #9a9a9a"></div>
<div class="t" style="top:885px;font-family:'Liberation Sans',sans-serif;font-size:13px;font-weight:400;color:#505050;line-height:16px;left:447.7px;transform:scaleX(1.006);transform-origin:left center;">205.91</div>
<div style="left:596px;top:882px;width:15px;height:8px;background:#f0f0f0;border:1px solid #cfcfcf"></div>
<div style="left:596px;top:891px;width:15px;height:8px;background:#e8e8e8;border:1px solid #cfcfcf"></div>
<svg style="left:598px;top:883px" width="12" height="18"><path d="M3,6 L6,3 L9,6 M3,11 L6,14 L9,11" stroke="#a8a8a8" fill="none"/></svg>
<div class="t" style="top:921px;font-family:'Liberation Sans',sans-serif;font-size:10px;font-weight:400;color:#333;line-height:16px;left:253.0px;transform:scaleX(1.153);transform-origin:left center;">მერიაში წარმოდგ. კალკულაცია</div>
<div style="left:445px;top:920px;width:168px;height:21px;background:#fff;border:1px solid #9a9a9a"></div>
<div class="t" style="top:925px;font-family:'Liberation Sans',sans-serif;font-size:13px;font-weight:400;color:#505050;line-height:16px;left:447.7px;transform:scaleX(1.006);transform-origin:left center;">205.92</div>
<div style="left:596px;top:922px;width:15px;height:8px;background:#f0f0f0;border:1px solid #cfcfcf"></div>
<div style="left:596px;top:931px;width:15px;height:8px;background:#e8e8e8;border:1px solid #cfcfcf"></div>
<svg style="left:598px;top:923px" width="12" height="18"><path d="M3,6 L6,3 L9,6 M3,11 L6,14 L9,11" stroke="#a8a8a8" fill="none"/></svg>
<div style="left:43px;top:941px;width:1177px;height:53px;background:linear-gradient(#c40000,#b90000);border-radius:6px 6px 0 0"></div>
<svg style="left:61px;top:956px" width="38" height="38"><circle cx="18.7" cy="19.2" r="18.4" fill="#fff"/><path d="M11,9.8 H27 L28,11 V22 Q28,28 18.5,31 Q9,28 9,22 V11Z" fill="#12947a"/><path d="M18.5,9.8 H27 L28,11 V19.5 H18.5Z" fill="#0a6e52"/><path d="M18.5,19.5 H28 V22 Q28,28 18.5,31Z" fill="#0f8468"/><path d="M18.5,9.8 V31 M9,19.5 H28" stroke="#e6f4ef" stroke-width=".7"/><path d="M12,14.8 H16.8 M14.4,12.3 V17.3" stroke="#fff" stroke-width="1.7"/><path d="M20.5,12.5 H26.5 L24.5,14.5 H22.5Z M23,14.5 H24 V17.5 H23Z" fill="#d8efe6"/><path d="M11.5,22.2 Q12.5,20.5 14.2,22 Q16,20.5 17,22.2 Q17,25 14.2,27.5 Q11.5,25 11.5,22.2Z" fill="#e0f2ec"/><path d="M20.5,21 H26.5 L25.5,22.5 H21.5Z M22,22.5 H25 V26 H22Z M21,26 H26 V27.5 H21Z" fill="#d8efe6"/></svg>
<div class="t" style="top:952px;font-family:'Liberation Sans',sans-serif;font-size:10px;font-weight:700;color:#fff;line-height:16px;left:293.6px;transform:scaleX(1.175);transform-origin:left center;">© 2011 | პროექტი ხორციელდება შრომის, ჯანმრთელობისა და სოციალური დაცვის სამინისტროს მიერ აშშ საერთაშორისო</div>
<div class="t" style="top:968px;font-family:'Liberation Sans',sans-serif;font-size:10px;font-weight:700;color:#fff;line-height:16px;left:315.6px;transform:scaleX(1.197);transform-origin:left center;">განვითარების სააგენტოს ჯანდაცვის სისტემის განმტკიცების პროგრამის ფინანსური და ტექნიკური მხარდაჭერით</div>
<svg style="left:1172px;top:952px" width="40" height="40"><circle cx="20" cy="20" r="18.7" fill="#b9c6da" stroke="#dfe5ee" stroke-width="1"/><circle cx="20" cy="20" r="15.8" fill="none" stroke="#3f5a96" stroke-width="2.4" stroke-dasharray="1.4,1.2"/><circle cx="20" cy="20" r="13" fill="#fff"/><rect x="12.5" y="10" width="15" height="4.5" fill="#1f3a80"/><path d="M14,12.2 H26" stroke="#fff" stroke-width=".9" stroke-dasharray="1.5,.7"/><path d="M12,18.5 Q16,16.5 20,18.5 Q24,20.5 28,18.5" stroke="#8a8a96" stroke-width="1.6" fill="none"/><path d="M13,23 H27" stroke="#2a3f88" stroke-width="1.5"/><path d="M13,24.5 H27 V27 L20,30.5 L13,27Z" fill="#fff"/><path d="M14,24.5 V28 M16.5,24.5 V29 M19,24.5 V30 M21.5,24.5 V30 M24,24.5 V29 M26.3,24.5 V28" stroke="#c42a2a" stroke-width="1.2"/></svg>
<div style="left:1262px;top:95px;width:18px;height:899px;background:linear-gradient(90deg,#eeede5,#fbfbf8 50%,#f3f1ec)"></div>
<div style="left:1264px;top:96px;width:15px;height:15px;background:linear-gradient(90deg,#c8d8fd,#b9cdf8);border:1px solid #fff;border-radius:2px;box-shadow:0 0 0 1px #a4bbec inset"></div>
<svg style="left:1266px;top:99px" width="12" height="9"><path d="M2,7 L6,3 L10,7" stroke="#4d6185" stroke-width="2.2" fill="none"/></svg>
<div style="left:1264px;top:112px;width:15px;height:575px;background:linear-gradient(90deg,#c8d8fd,#b9cdf8);border:1px solid #fff;border-radius:2px;box-shadow:0 0 0 1px #a4bbec inset"></div>
<svg style="left:1266px;top:394px" width="12" height="12"><path d="M2,2 H8 M2,4 H8 M2,6 H8 M2,8 H8" stroke="#eef3ff" stroke-width="1"/><path d="M3,3 H9 M3,5 H9 M3,7 H9 M3,9 H9" stroke="#86a4ee" stroke-width="1"/></svg>
<div style="left:1279px;top:95px;width:1px;height:899px;background:#9fb0cc"></div>
<div style="left:1264px;top:977px;width:15px;height:16px;background:linear-gradient(90deg,#c8d8fd,#b9cdf8);border:1px solid #fff;border-radius:2px;box-shadow:0 0 0 1px #a4bbec inset"></div>
<svg style="left:1266px;top:981px" width="12" height="9"><path d="M2,2 L6,6 L10,2" stroke="#4d6185" stroke-width="2.2" fill="none"/></svg>
<div style="left:0px;top:994px;width:1280px;height:30px;background:linear-gradient(#2a6ce6 0px,#4a93e6 1.5px,#4a93e6 2.5px,#2a65dc 5px,#2157d6 9px,#225cd9 18px,#2663de 27px,#1d4cb8 28.5px,#1941a5 30px)"></div>
<div style="left:0px;top:994px;width:96px;height:30px;background:linear-gradient(#2f8a3a 0px,#5cbf5c 2px,#49b449 5px,#3cac3c 14px,#3db43d 24px,#2f9a2f 28px,#266f2a 30px);border-radius:0 14px 14px 0;box-shadow:inset -3px 0 3px rgba(0,40,0,.3)"></div>
<svg style="left:9px;top:999px" width="20" height="20"><path d="M2,3 Q5,1 9,3 L8,9 Q5,7 1,9Z" fill="#f0562a"/><path d="M10,3 Q14,5 18,3 L17,9 Q13,11 9,9Z" fill="#6cc23c"/><path d="M1,10 Q5,8 8,10 L7,16 Q4,14 0,16Z" fill="#2f7bf0"/><path d="M9,10 Q13,12 17,10 L16,16 Q12,18 8,16Z" fill="#fbc614"/></svg>
<div class="t" style="top:998px;font-family:'Liberation Sans',sans-serif;font-size:17px;font-weight:700;color:#fff;line-height:22px;font-style:italic;text-shadow:1px 1px 1px rgba(0,0,0,.5);left:33.0px;transform:scaleX(1.085);transform-origin:left center;">start</div>
<svg style="left:100px;top:994px" width="160" height="30"><circle cx="17" cy="15" r="7.2" fill="#db3b2e"/><path d="M17,15 L10.3,17.7 A7.2,7.2 0 0 0 20.6,21.3Z" fill="#2f9e48"/><path d="M17,15 L20.6,21.3 A7.2,7.2 0 0 0 23.8,12.2Z" fill="#f5c12a"/><circle cx="17" cy="15" r="3.3" fill="#3b82e6" stroke="#fff" stroke-width="1.3"/><path d="M35,15.5 H46.5 Q46.5,8.5 40.5,8.5 Q34,8.5 34,15 Q34,21.5 40.5,21.5 Q44.5,21.5 46,19" stroke="#2aa0ea" stroke-width="2.6" fill="none"/><path d="M33.5,21 Q36,6 47,8.5" stroke="#e7b52a" stroke-width="1.4" fill="none"/><circle cx="63" cy="15" r="7.3" fill="#e86b1e"/><circle cx="64.5" cy="13.8" r="4.3" fill="#3c6cc8"/><path d="M56,13 Q58,7 63,8 Q60,10 61,13Z" fill="#f3a23b"/><rect x="78.5" y="7.5" width="15" height="15" fill="#5b8fcf" stroke="#1c2a44" stroke-width="1"/><path d="M84,7.5 Q80,15 84,22.5" stroke="#1c2a44" stroke-width="1.3" fill="none"/><text x="80" y="18" font-size="6.5" font-weight="bold" fill="#fff" font-family="Liberation Sans">KMP</text><ellipse cx="108.5" cy="15" rx="7" ry="7.8" fill="#cc1420"/><ellipse cx="108.5" cy="15" rx="2.8" ry="5.6" fill="#f2f2f2"/><rect x="125" y="8" width="13" height="14" rx="1.5" fill="#f0ecd8" stroke="#2f66c0" stroke-width="1.6"/><path d="M128,17 L135,10" stroke="#2f66c0" stroke-width="1.8"/><circle cx="138" cy="10" r="1.5" fill="#f07020"/></svg>
<div style="left:267px;top:997px;width:157px;height:24px;background:linear-gradient(#4a8cf0,#3c7fe8 3px,#3a78e0);box-shadow:inset -1px -1px 1px rgba(0,0,0,.25),inset 1px 1px 1px rgba(255,255,255,.3);border-radius:3px"></div>
<svg style="left:275px;top:1001px" width="16" height="16"><circle cx="8" cy="8" r="7.5" fill="#e0402b"/><path d="M8,8 L1,11 A7.5,7.5 0 0 0 12,14.5Z" fill="#3aa14a"/><path d="M8,8 L12,14.5 A7.5,7.5 0 0 0 15,5Z" fill="#f8c82a"/><circle cx="8" cy="8" r="3.3" fill="#4a8af0" stroke="#fff" stroke-width="1.2"/></svg>
<div style="left:426px;top:997px;width:160px;height:24px;background:#1e4fb8;box-shadow:inset 1px 1px 2px #143c8c;border-radius:3px"></div>
<svg style="left:434px;top:1001px" width="16" height="16"><circle cx="8" cy="8" r="7.5" fill="#e8711c"/><circle cx="9" cy="7" r="4.5" fill="#3a64c8"/></svg>
<div style="left:587px;top:997px;width:158px;height:24px;background:linear-gradient(#4a8cf0,#3c7fe8 3px,#3a78e0);box-shadow:inset -1px -1px 1px rgba(0,0,0,.25),inset 1px 1px 1px rgba(255,255,255,.3);border-radius:3px"></div>
<svg style="left:595px;top:1001px" width="16" height="16"><rect x="0.5" y="0.5" width="15" height="15" fill="#fff" stroke="#1f7a2e"/><rect x="2" y="2" width="9" height="12" fill="#1f7a2e"/><path d="M3.5,4 L9.5,12 M9.5,4 L3.5,12" stroke="#fff" stroke-width="1.6"/></svg>
<div class="t" style="top:1002px;font-family:'Liberation Sans',sans-serif;font-size:12px;font-weight:400;color:#fff;line-height:14px;left:294.5px;transform:scaleX(0.924);transform-origin:left center;">RE: E Health Activitie...</div>
<div class="t" style="top:1002px;font-family:'Liberation Sans',sans-serif;font-size:12px;font-weight:400;color:#fff;line-height:14px;left:455.5px;transform:scaleX(0.905);transform-origin:left center;">Mozilla Firefox</div>
<div class="t" style="top:1002px;font-family:'Liberation Sans',sans-serif;font-size:12px;font-weight:400;color:#fff;line-height:14px;left:615.0px;transform:scaleX(0.925);transform-origin:left center;">Microsoft Excel - New...</div>
<div style="left:1068px;top:1001px;width:19px;height:16px;background:#2f62c4"></div>
<div class="t" style="top:1002px;font-family:'Liberation Sans',sans-serif;font-size:12px;font-weight:400;color:#fff;line-height:14px;left:1070.0px;transform:scaleX(0.900);transform-origin:left center;">EN</div>
<div style="left:1097px;top:994px;width:183px;height:30px;background:linear-gradient(#1a8ae8 0px,#2ba4f5 2px,#148ee8 6px,#0c84e0 24px,#0a6fcc 30px);border-left:1px solid #0b52b0"></div>
<svg style="left:1100px;top:996px" width="140" height="26"><path d="M12,6 Q9,5 9.5,9 Q9,13 10.5,15 Q10.5,20 15,19.5 Q18,21 21.5,18 Q23,15 22,12 Q23,8 20,6.5 Q17,5 15,6 Q13.5,5 12,6Z" fill="#f5c518"/><path d="M14,9 Q13.5,13 17.5,15" stroke="#fff" stroke-width="1.4" fill="none"/><rect x="27" y="5" width="14" height="3.5" fill="#9da1a8"/><rect x="26" y="8" width="16" height="7" rx="1" fill="#b9bcc4"/><rect x="29" y="14" width="10" height="6" fill="#f4f4f4"/><rect x="27" y="9" width="14" height="1" fill="#7a7e88"/><rect x="45.5" y="5" width="13" height="12" rx="1.5" fill="#1f8fe8"/><circle cx="51.5" cy="11" r="4.5" fill="#fff"/><path d="M48.5,11 H54.5 M48.5,11 L50,9.5 M48.5,11 L50,12.5 M54.5,11 L53,9.5 M54.5,11 L53,12.5" stroke="#1f8fe8" stroke-width="1.1"/><rect x="51.5" y="16" width="8" height="4" rx="1" fill="#66dd22" stroke="#1a7a10" stroke-width=".8"/><rect x="68" y="5" width="7.5" height="7" fill="#2e3d6a" stroke="#b8c6e8" stroke-width="1"/><rect x="62.5" y="9" width="7" height="6.5" fill="#8fc7f4" stroke="#dfe8f5" stroke-width="1"/><path d="M63,18 H72 L70,20 H64Z" fill="#d8dde8"/><circle cx="86" cy="11" r="5.5" fill="#5a5a60"/><circle cx="86" cy="11" r="2.8" fill="#9a9aa2"/><path d="M89,19 Q93,17 95,13 M90,20 Q94,19 96,15" stroke="#b9b4f0" stroke-width=".9" fill="none"/><rect x="99" y="5" width="14" height="14" fill="#1d56a8" stroke="#c9d4ea" stroke-width="1"/><path d="M101,19 H113 V20.5 H101Z" fill="#0b2a6e"/><circle cx="106" cy="11.5" r="2.2" fill="none" stroke="#9fc0f0" stroke-width=".8" stroke-dasharray="1,1"/><rect x="116.5" y="5" width="10" height="7.5" fill="#e0401c" stroke="#3a1a10" stroke-width=".8"/><rect x="122" y="10" width="9.5" height="7" fill="#4cc83a" stroke="#103a10" stroke-width=".8"/><rect x="124.5" y="17.5" width="4.5" height="2" fill="#222"/></svg>
<div class="t" style="top:1002px;font-family:'Liberation Sans',sans-serif;font-size:12px;font-weight:400;color:#fff;line-height:14px;left:1239.0px;transform:scaleX(0.932);transform-origin:left center;">18:14</div></body></html>
